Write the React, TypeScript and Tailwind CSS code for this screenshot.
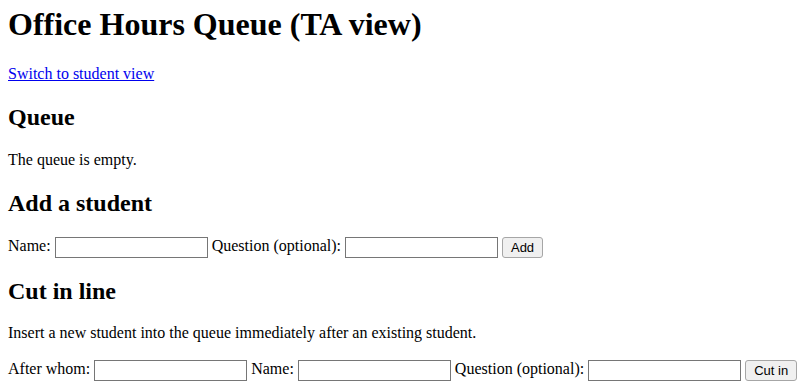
const serif = "font-['Liberation_Serif','Times_New_Roman',serif]";

function TextInput() {
  return (
    <input
      type="text"
      className="h-[21px] w-[153px] border border-[#767676] bg-white px-[2px] align-middle text-[13px] outline-none"
    />
  );
}

function Btn({ label }: { label: string }) {
  return (
    <button className="h-[21px] rounded-[3px] border border-[#a6a6a6] bg-[#f0f0f0] px-[8px] align-middle font-['Liberation_Sans',Arial,sans-serif] text-[13px] leading-none text-black">
      {label}
    </button>
  );
}

export default function App() {
  return (
    <div className={`${serif} bg-white px-2 pt-[6px] text-[16px] text-black`}>
      <h1 className="mb-[22px] text-[32px] font-bold leading-[37px]">Office Hours Queue (TA view)</h1>
      <p className="my-4 leading-[18px]">
        <a href="#" className="text-[#0000ee] underline">
          Switch to student view
        </a>
      </p>
      <h2 className="mt-[20px] mb-[20px] text-[24px] font-bold leading-[28px]">Queue</h2>
      <p className="leading-[18px]">The queue is empty.</p>
      <h2 className="mt-[20px] mb-[18px] text-[24px] font-bold leading-[28px]">Add a student</h2>
      <form className="leading-[21px]" onSubmit={(e) => e.preventDefault()}>
        Name: <TextInput /> Question (optional): <TextInput /> <Btn label="Add" />
      </form>
      <h2 className="mt-[19px] mb-[19px] text-[24px] font-bold leading-[28px]">Cut in line</h2>
      <p className="mb-4 leading-[18px]">Insert a new student into the queue immediately after an existing student.</p>
      <form className="leading-[21px]" onSubmit={(e) => e.preventDefault()}>
        After whom: <TextInput /> Name: <TextInput /> Question (optional): <TextInput /> <Btn label="Cut in" />
      </form>
    </div>
  );
}
